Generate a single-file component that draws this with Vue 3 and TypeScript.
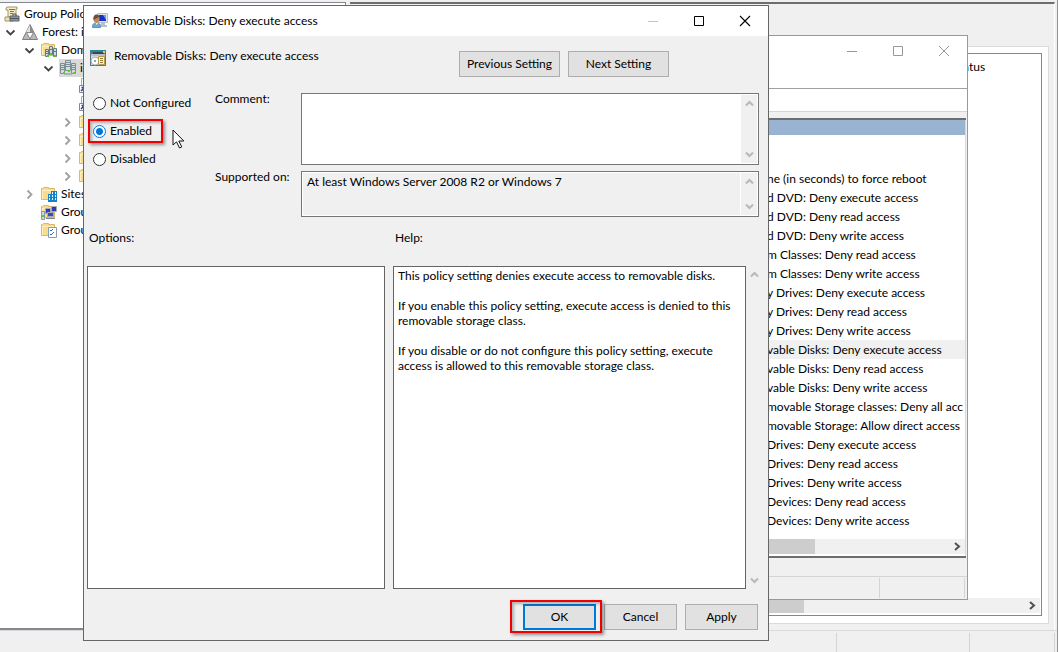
<script setup lang="ts">
import { ref } from 'vue'

type IconName = 'scroll' | 'forest' | 'domains' | 'servers' | 'link' | 'folder' | 'sites' | 'modeling' | 'results'

interface TreeNode {
  label: string
  level: number
  icon: IconName
  state?: 'open' | 'closed'
  selected?: boolean
}

const tree: TreeNode[] = [
  { label: 'Group Policy', level: 0, icon: 'scroll' },
  { label: 'Forest: i', level: 1, icon: 'forest', state: 'open' },
  { label: 'Dom', level: 2, icon: 'domains', state: 'open' },
  { label: 'i', level: 3, icon: 'servers', state: 'open', selected: true },
  { label: '', level: 4, icon: 'link' },
  { label: '', level: 4, icon: 'link' },
  { label: '', level: 4, icon: 'folder', state: 'closed' },
  { label: '', level: 4, icon: 'folder', state: 'closed' },
  { label: '', level: 4, icon: 'folder', state: 'closed' },
  { label: '', level: 4, icon: 'folder', state: 'closed' },
  { label: 'Sites', level: 2, icon: 'sites', state: 'closed' },
  { label: 'Grou', level: 2, icon: 'modeling' },
  { label: 'Grou', level: 2, icon: 'results' },
]

const policies: string[] = [
  'ne (in seconds) to force reboot',
  'd DVD: Deny execute access',
  'd DVD: Deny read access',
  'd DVD: Deny write access',
  'm Classes: Deny read access',
  'm Classes: Deny write access',
  'y Drives: Deny execute access',
  'y Drives: Deny read access',
  'y Drives: Deny write access',
  'vable Disks: Deny execute access',
  'vable Disks: Deny read access',
  'vable Disks: Deny write access',
  'movable Storage classes: Deny all acc',
  'movable Storage: Allow direct access',
  'Drives: Deny execute access',
  'Drives: Deny read access',
  'Drives: Deny write access',
  'Devices: Deny read access',
  'Devices: Deny write access',
]
const activePolicy = 9

const states = ['Not Configured', 'Enabled', 'Disabled']
const current = ref('Enabled')
const comment = ref('')
const supported = ref('At least Windows Server 2008 R2 or Windows 7')
const help = [
  ['This policy setting denies execute access to removable disks.'],
  ['If you enable this policy setting, execute access is denied to this', 'removable storage class.'],
  ['If you disable or do not configure this policy setting, execute', 'access is allowed to this removable storage class.'],
]
</script>

<template>
  <main class="desktop">
    <section class="console">
      <div class="panes">
        <nav class="tree" aria-label="Console tree">
          <div v-for="(node, i) in tree" :key="i" class="node" :class="'level-' + node.level">
            <span class="twist">
              <svg v-if="node.state === 'open'" width="11" height="11" viewBox="0 0 11 11"><path d="M1.5 3.5 5.5 7.5 9.5 3.5" fill="none" stroke="#444" stroke-width="1.8" /></svg>
              <svg v-else-if="node.state === 'closed'" width="11" height="11" viewBox="0 0 11 11"><path d="M3.5 1.5 7.5 5.5 3.5 9.5" fill="none" stroke="#a0a0a0" stroke-width="1.8" /></svg>
            </span>
            <span class="entry" :class="{ selected: node.selected }">
              <svg class="glyph" width="16" height="16" viewBox="0 0 16 16">
                <g v-if="node.icon === 'scroll'">
                  <path d="M3 1h10v2h-1v8H4V4H2V2Z" fill="#f7ecc9" stroke="#a4946a" />
                  <path d="M1 11h8v4H1Z" fill="#f1e1ae" stroke="#a4946a" />
                  <path d="M5 3.5h6M6 5.5h4M6 7.5h3" stroke="#77705b" />
                  <path d="M6 10h9v5H6z" fill="#8d9599" stroke="#59656b" />
                  <path d="M9 10V8h3v2M6 12.5h9" fill="none" stroke="#4d565b" />
                </g>
                <g v-else-if="node.icon === 'forest'">
                  <path d="M8 .5 15.5 15.5H.5Z" fill="#b9b9b9" stroke="#808080" />
                  <path d="M8 1v7L4 8.5Z" fill="#e4e4e4" />
                  <path d="M4.5 8.5h7L8 15Z" fill="#fdfdfd" stroke="#888" />
                  <path d="M8 1 11.5 8H8Z" fill="#8d8d8d" />
                </g>
                <g v-else-if="node.icon === 'servers'">
                  <path d="M5.5 .5h5v10h-5zM.5 3.5h4v10h-4zM11.5 3.5h4v10h-4z" fill="#d3dcde" stroke="#7e8e93" />
                  <path d="M6 2.5h4M6 4.5h4M6 6.5h4M1 5.5h3M1 7.5h3M1 9.5h3M12 5.5h3M12 7.5h3M12 9.5h3" stroke="#7c8f95" />
                  <path d="M4 14h8" stroke="#a4b5ba" stroke-width="2" />
                  <path d="M8 10h2v2H8zM3 12h2v2H3zM13 12h2v2h-2z" fill="#55d51c" />
                </g>
                <g v-else-if="node.icon === 'link'">
                  <path d="M2.5 .5h12v14h-12z" fill="#fff" stroke="#a9a9a9" />
                  <path d="M.5 7.5h7v7h-7z" fill="#fff" stroke="#888" />
                  <path d="M2 13 5.5 9.5M2.5 9.5h3v3" fill="none" stroke="#273993" stroke-width="1.5" />
                </g>
                <g v-else>
                  <path d="M.5 2.5h1l1-1h5v1h6v11H.5z" fill="#f8dc8b" stroke="#dcb964" />
                  <path d="M2 4.5h11M1.5 4v9" stroke="#fff1bd" />
                  <g v-if="node.icon === 'domains'">
                    <path d="M8.5 4.5h3v8h-3zM4.5 7.5h3v7h-3zM12.5 6.5h3v8h-3z" fill="#d0dadd" stroke="#637a83" />
                    <path d="M8 7.5h4M4 9.5h4M12 9.5h4M4 11.5h4" stroke="#637a83" />
                    <path d="M6 13h2v2H6zM13 13h2v2h-2zM9 11h2v2H9z" fill="#50c622" />
                  </g>
                  <g v-else-if="node.icon === 'sites'">
                    <path d="M7 8h3V5h6v11H7z" fill="#1683c9" />
                    <path d="M11 7h1m2 0h1M8 10h1m2 0h1m2 0h1M8 13h1m2 0h1m2 0h1" stroke="#e4f4ff" stroke-width="2" />
                  </g>
                  <g v-else-if="node.icon === 'modeling'">
                    <path d="M4.5 4.5h5v5h-5zM10.5 2.5h5v5h-5z" fill="#293fba" stroke="#acacac" />
                    <path d="M.5 7.5h3v8h-3z" fill="#d5dadd" stroke="#8a959c" />
                    <path d="M6.5 8.5h6v4h-6z" fill="#394db6" stroke="#a7a9b8" />
                    <path d="M5 14.5h9" stroke="#7c848b" />
                    <path d="M1 11h2v2H1z" fill="#56cc33" />
                  </g>
                  <g v-else-if="node.icon === 'results'">
                    <path d="M7.5 5.5h8v10h-8z" fill="#fff" stroke="#899eac" />
                    <path d="m9 8 1 1 2-2M9 12l1 1 3-3" fill="none" stroke="#2370bd" />
                  </g>
                </g>
              </svg>
              <span class="caption">{{ node.label }}</span>
            </span>
          </div>
        </nav>
        <div class="detail">
          <div class="tab-page">
            <div class="links-list">
              <div class="column-head">atus</div>
              <div class="hbar outer-bar">
                <span class="thumb"></span>
                <svg width="9" height="9" viewBox="0 0 9 9"><path d="M2 1 6 4.5 2 8" fill="none" stroke="#505050" stroke-width="2" /></svg>
              </div>
            </div>
          </div>
        </div>
      </div>
      <div class="status"><span></span><span></span><span></span></div>
    </section>

    <section class="editor">
      <div class="editor-title">
        <button type="button" class="sys" aria-label="Minimize editor"><svg width="12" height="12" viewBox="0 0 12 12"><path d="M1 6.5h10" stroke="#999" /></svg></button>
        <button type="button" class="sys" aria-label="Maximize editor"><svg width="12" height="12" viewBox="0 0 12 12"><path d="M1.5 1.5h9v9h-9z" fill="none" stroke="#999" /></svg></button>
        <button type="button" class="sys" aria-label="Close editor"><svg width="12" height="12" viewBox="0 0 12 12"><path d="m1 1 10 10M11 1 1 11" stroke="#999" /></svg></button>
      </div>
      <div class="toolbar"></div>
      <div class="editor-pane">
        <div class="band"></div>
        <ul class="policies">
          <li v-for="(policy, i) in policies" :key="i" :class="{ active: i === activePolicy }">{{ policy }}</li>
        </ul>
        <div class="hbar inner-bar">
          <span class="thumb"></span>
          <svg width="9" height="9" viewBox="0 0 9 9"><path d="M2 1 6 4.5 2 8" fill="none" stroke="#505050" stroke-width="2" /></svg>
        </div>
      </div>
      <div class="editor-tabs"></div>
      <div class="editor-status"><span></span><span></span></div>
    </section>

    <section class="dialog" role="dialog" aria-labelledby="dialog-title">
      <header class="titlebar">
        <svg width="16" height="16" viewBox="0 0 16 16">
          <path d="M5.5 .5h10v9h-10z" fill="#dfe5ea" stroke="#b4bdc5" />
          <path d="M7 2h7v6H7z" fill="#1730c9" />
          <path d="M11 2h3v5z" fill="#6f9af0" />
          <path d="M9 10h4v2h2v2H8z" fill="#b9c0c6" />
          <path d="M.5 14.5v-2c0-3 8-3 8 0v2Z" fill="#67a8d4" stroke="#5a96bf" />
          <ellipse cx="4.5" cy="6" rx="3" ry="4" fill="#c08a5c" />
          <path d="M1.5 7c-1-6 5-7 6-3L5 5Z" fill="#6b5038" />
          <path d="m3.5 10 1 2 2-2" fill="#f7e2cd" />
        </svg>
        <h1 id="dialog-title">Removable Disks: Deny execute access</h1>
        <button type="button" class="sys" aria-label="Minimize" disabled><svg width="12" height="12" viewBox="0 0 12 12"><path d="M1 6.5h10" stroke="#c4c4c4" /></svg></button>
        <button type="button" class="sys" aria-label="Maximize"><svg width="12" height="12" viewBox="0 0 12 12"><path d="M1.5 1.5h9v9h-9z" fill="none" stroke="#000" /></svg></button>
        <button type="button" class="sys" aria-label="Close"><svg width="12" height="12" viewBox="0 0 12 12"><path d="m1 1 10 10M11 1 1 11" stroke="#000" stroke-width="1.1" /></svg></button>
      </header>

      <div class="heading">
        <svg width="16" height="16" viewBox="0 0 16 16">
          <path d="M0 0h16v16H0z" fill="#587686" />
          <path d="M1 6h14v9H1z" fill="#dcdcd4" />
          <path d="M0 0h16v2H0z" fill="#2a8998" />
          <path d="M3 2h11v2H3z" fill="#35475e" />
          <path d="M13 1h2v2h-2z" fill="#e8d05c" />
          <path d="M1 4h14v2H1z" fill="#b5c2c9" />
          <circle cx="5" cy="11" r="4" fill="#fff" stroke="#a1b3ab" />
          <circle cx="5" cy="11" r="1" fill="#64888b" />
          <path d="M8.5 6.5h6v8h-6z" fill="#fff1bd" stroke="#b59a52" />
          <path d="M10 8.5h3M10 10.5h3M10 12.5h3" stroke="#987c38" />
        </svg>
        <h2>Removable Disks: Deny execute access</h2>
        <div class="nav-buttons">
          <button type="button" class="push">Previous Setting</button>
          <button type="button" class="push">Next Setting</button>
        </div>
      </div>

      <div class="settings">
        <fieldset class="states">
          <label v-for="s in states" :key="s" :class="{ marked: s === 'Enabled' }">
            <input v-model="current" type="radio" name="state" :value="s" />
            <span>{{ s }}</span>
          </label>
        </fieldset>
        <label class="field-label" for="comment">Comment:</label>
        <div class="field tall">
          <textarea id="comment" v-model="comment"></textarea>
          <div class="vbar">
            <svg width="9" height="9" viewBox="0 0 9 9"><path d="M1 6.5 4.5 3 8 6.5" fill="none" stroke="#b8b8b8" stroke-width="2" /></svg>
            <svg width="9" height="9" viewBox="0 0 9 9"><path d="M1 2.5 4.5 6 8 2.5" fill="none" stroke="#b8b8b8" stroke-width="2" /></svg>
          </div>
        </div>
        <label class="field-label" for="supported">Supported on:</label>
        <div class="field short">
          <textarea id="supported" v-model="supported" readonly></textarea>
          <div class="vbar">
            <svg width="9" height="9" viewBox="0 0 9 9"><path d="M1 6.5 4.5 3 8 6.5" fill="none" stroke="#b8b8b8" stroke-width="2" /></svg>
            <svg width="9" height="9" viewBox="0 0 9 9"><path d="M1 2.5 4.5 6 8 2.5" fill="none" stroke="#b8b8b8" stroke-width="2" /></svg>
          </div>
        </div>
      </div>

      <div class="lower">
        <h3>Options:</h3>
        <h3>Help:</h3>
        <div class="box"></div>
        <div class="box help">
          <p v-for="(para, i) in help" :key="i"><template v-for="(line, j) in para" :key="j"><br v-if="j > 0" />{{ line }}</template></p>
        </div>
        <div class="vbar help-bar">
          <svg width="9" height="9" viewBox="0 0 9 9"><path d="M1 6.5 4.5 3 8 6.5" fill="none" stroke="#b8b8b8" stroke-width="2" /></svg>
          <svg width="9" height="9" viewBox="0 0 9 9"><path d="M1 2.5 4.5 6 8 2.5" fill="none" stroke="#b8b8b8" stroke-width="2" /></svg>
        </div>
      </div>

      <footer class="actions">
        <span class="ok-slot"><button type="button" class="push default">OK</button></span>
        <button type="button" class="push">Cancel</button>
        <button type="button" class="push">Apply</button>
      </footer>
    </section>

    <svg class="pointer" width="13" height="21" viewBox="0 0 13 21">
      <path d="M1 1v15l3.5-3.2L7.5 19l2.3-1.1-3-5.9h5Z" fill="#fff" stroke="#111" stroke-linejoin="round" />
    </svg>
  </main>
</template>

<style>
body {
  margin: 0;
  background: #f0f0f0;
}
</style>

<style scoped>
* {
  box-sizing: border-box;
}
.desktop {
  position: relative;
  min-height: 100vh;
  display: flex;
  overflow: hidden;
  background: #f0f0f0;
  color: #000;
  font-family: Lato, "Open Sans", sans-serif;
  font-size: 12px;
  line-height: 16px;
}
svg {
  display: block;
  flex: none;
}
h1,
h2,
h3,
p,
ul {
  margin: 0;
  padding: 0;
  font-size: inherit;
  font-weight: 400;
}
button,
textarea {
  font: inherit;
  color: inherit;
}

/* Management console */
.console {
  flex: 1;
  display: flex;
  flex-direction: column;
  border-right: 1px solid #909090;
}
.panes {
  flex: 1;
  display: flex;
  gap: 4px;
  padding: 2px 2px 0 0;
}
.tree {
  flex: 0 0 346px;
  padding-top: 2px;
  background: #fff;
  border: solid #828790;
  border-width: 1px 1px 2px 0;
}
.node {
  display: flex;
  height: 18px;
}
.level-0 { padding-left: 4px; }
.level-1 { padding-left: 5px; }
.level-2 { padding-left: 24px; }
.level-3 { padding-left: 43px; }
.level-4 { padding-left: 62px; }
.twist {
  flex: 0 0 16px;
  display: flex;
  align-items: center;
}
.level-0 .twist {
  display: none;
}
.entry {
  display: flex;
  align-items: center;
  gap: 4px;
  padding-left: 1px;
  white-space: nowrap;
}
.level-0 .entry {
  padding-left: 0;
}
.selected {
  background: #d9d9d9;
  padding-right: 40px;
}
.detail {
  flex: 1;
  display: flex;
  padding: 42px 5px 6px 0;
  border-top: 2px solid #6d6d6d;
  border-right: 1px solid #fff;
}
.tab-page {
  flex: 1;
  display: flex;
  padding: 6px 6px 7px;
  background: #fff;
  border: 1px solid #dcdcdc;
}
.links-list {
  flex: 1;
  display: flex;
  flex-direction: column;
  justify-content: space-between;
  border: 1px solid #828790;
}
.column-head {
  align-self: flex-end;
  width: 78px;
  padding-top: 5px;
}
.hbar {
  display: flex;
  align-items: center;
  justify-content: space-between;
  height: 15px;
  padding-right: 3px;
  background: #f0f0f0;
}
.outer-bar {
  margin: 0 1px 2px;
}
.thumb {
  height: 15px;
  background: #cdcdcd;
}
.outer-bar .thumb {
  width: calc(100% - 233px);
}
.status {
  display: flex;
  justify-content: flex-end;
  height: 22px;
  padding: 2px 2px 0 0;
  border-top: 1px solid #dadada;
}
.status span {
  width: 133px;
  border-right: 1px solid #d4d4d4;
}
.status span:last-child {
  width: 85px;
}

/* Policy editor behind the dialog */
.editor {
  position: absolute;
  top: 35px;
  right: 90px;
  bottom: 52px;
  left: 120px;
  display: flex;
  flex-direction: column;
  background: #f0f0f0;
  border: 1px solid #999;
}
.editor-title {
  display: flex;
  justify-content: flex-end;
  height: 53px;
  background: #fff;
  border-bottom: 1px solid #a0a0a0;
}
.sys {
  display: grid;
  place-items: center;
  width: 46px;
  height: 30px;
  padding: 0;
  background: none;
  border: 0;
}
.toolbar {
  height: 23px;
  background: #fff;
  border-bottom: 1px solid #d4d4d4;
}
.editor-pane {
  flex: 1;
  display: flex;
  flex-direction: column;
  margin: 6px 1px 0 0;
  background: #fff;
  border: solid #6d6d6d;
  border-width: 2px 0 2px 1px;
  box-shadow: inset -1px 0 #d8d8d8;
}
.band {
  height: 15px;
  margin-right: 1px;
  background: #99b4d1;
}
.policies {
  flex: 1;
  margin: 34px 1px 0 0;
  list-style: none;
}
.policies li {
  height: 19px;
  padding-left: 645px;
  line-height: 19px;
  white-space: nowrap;
}
.policies .active {
  background: #f0f0f0;
}
.inner-bar {
  margin: 0 1px 2px 0;
}
.inner-bar .thumb {
  width: calc(100% - 147px);
}
.editor-tabs {
  height: 18px;
}
.editor-status {
  display: flex;
  justify-content: flex-end;
  height: 23px;
  padding: 1px 2px 1px 0;
  border-top: 1px solid #d4d4d4;
}
.editor-status span {
  width: 85px;
  border-right: 1px solid #d4d4d4;
}

/* Setting dialog */
.dialog {
  position: absolute;
  top: 5px;
  right: 289px;
  bottom: 11px;
  left: 83px;
  display: flex;
  flex-direction: column;
  background: #f0f0f0;
  border: 1px solid #666;
}
.titlebar {
  display: flex;
  align-items: center;
  height: 30px;
  padding-left: 8px;
  background: #fff;
}
.titlebar h1 {
  flex: 1;
  padding-left: 5px;
  white-space: nowrap;
}
.heading {
  display: flex;
  align-items: flex-start;
  gap: 8px;
  height: 57px;
  padding: 12px 99px 0 6px;
}
.heading svg {
  margin-top: 2px;
}
.heading h2 {
  flex: 1;
}
.nav-buttons {
  display: flex;
  gap: 8px;
  padding-top: 3px;
}
.push {
  width: 73px;
  height: 26px;
  padding: 0;
  background: #e1e1e1;
  border: 1px solid #adadad;
  line-height: 16px;
  white-space: nowrap;
}
.nav-buttons .push {
  width: 101px;
}
.settings {
  display: grid;
  grid-template-columns: 127px 86px 1fr;
  grid-template-rows: 72px 46px;
  row-gap: 6px;
  padding: 0 9px 0 4px;
}
.states {
  grid-row: 1 / 3;
  display: flex;
  flex-direction: column;
  align-items: flex-start;
  gap: 4px;
  min-width: 0;
  margin: -2px 0 0;
  padding: 0;
  border: 0;
}
.states label {
  display: flex;
  align-items: center;
  gap: 4px;
  height: 24px;
  padding: 0 9px 0 3px;
  border: 2px solid transparent;
  line-height: 18px;
  white-space: nowrap;
}
.states .marked {
  border-color: #f00000;
  box-shadow: 2px 2px 3px #0006, inset 2px 2px 3px #0004;
}
.states input {
  appearance: none;
  width: 13px;
  height: 13px;
  margin: 0;
  background: #fff;
  border: 1px solid #333;
  border-radius: 50%;
}
.states input:checked {
  background: radial-gradient(circle, #0078d7 0 3px, #fff 4px);
  border-color: #0078d7;
}
.field-label {
  line-height: 12px;
}
.field {
  display: flex;
  padding: 1px;
  background: #fff;
  border: 1px solid #767676;
}
.field textarea {
  flex: 1;
  min-width: 0;
  padding: 1px 4px;
  background: #fff;
  border: 0;
  outline: 0;
  resize: none;
  overflow: hidden;
}
.short textarea {
  background: #f0f0f0;
}
.vbar {
  display: flex;
  flex-direction: column;
  align-items: center;
  justify-content: space-between;
  width: 16px;
  margin-left: 1px;
  padding: 4px 0;
  background: #f0f0f0;
}
.lower {
  flex: 1;
  display: grid;
  grid-template-columns: 298fr 361fr 16px;
  grid-template-rows: 36px 1fr;
  padding: 13px 6px 0 3px;
}
.lower h3 {
  padding-left: 2px;
}
.lower h3:nth-child(2) {
  grid-column: 2 / 4;
  padding-left: 10px;
}
.box {
  background: #fff;
  border: 1px solid #646464;
}
.help {
  margin-left: 8px;
  padding: 1px 4px;
  line-height: 15px;
}
.help p {
  margin-bottom: 15px;
  white-space: nowrap;
}
.help-bar {
  margin-left: 0;
}
.actions {
  display: flex;
  justify-content: flex-end;
  align-items: flex-start;
  gap: 8px;
  padding: 15px 10px 10px;
}
.default {
  border: 2px solid #0078d7;
}
.ok-slot {
  position: relative;
}
.ok-slot::after {
  content: "";
  position: absolute;
  top: -4px;
  right: -6px;
  bottom: -3px;
  left: -13px;
  border: 2px solid #f00000;
  box-shadow: 2px 2px 3px #0006, inset 2px 2px 3px #0004;
  pointer-events: none;
}
.ok-slot .push {
  display: block;
}
.pointer {
  position: absolute;
  top: 129px;
  left: 172px;
}
</style>
